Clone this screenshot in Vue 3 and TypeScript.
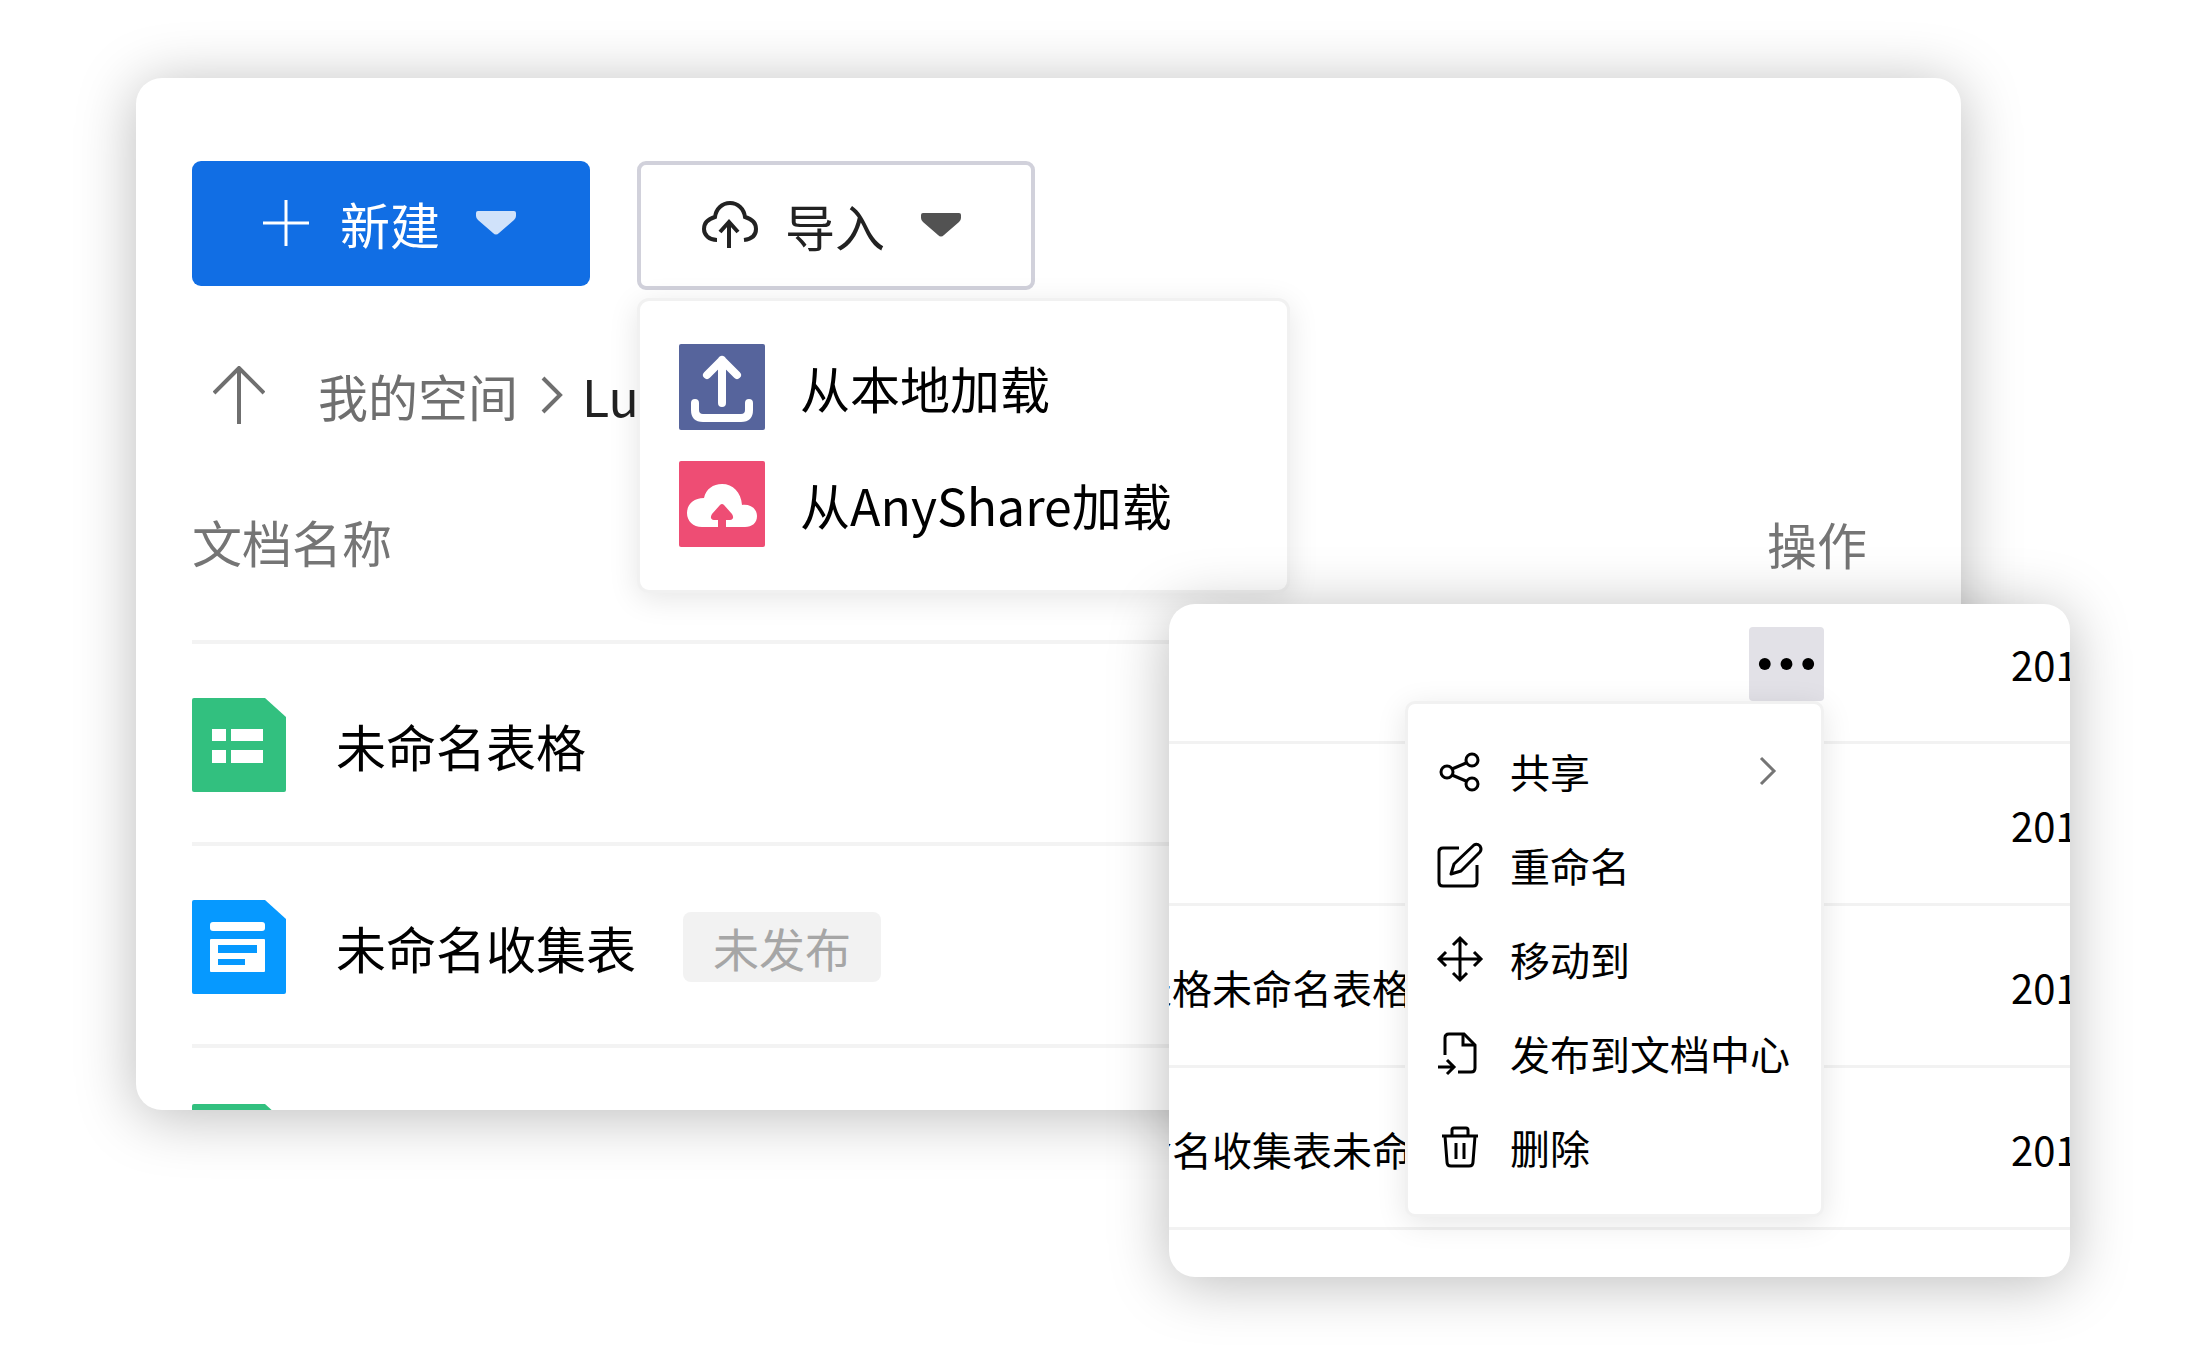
<script setup lang="ts">
interface DocRow {
  name: string
  kind: 'sheet' | 'form'
  badge?: string
}

interface FileRow {
  name: string
  date: string
  active?: boolean
}

type MenuIcon = 'share' | 'rename' | 'move' | 'publish' | 'delete'

const docs: DocRow[] = [
  { name: '未命名表格', kind: 'sheet' },
  { name: '未命名收集表', kind: 'form', badge: '未发布' },
]

const files: FileRow[] = [
  { name: '', date: '201', active: true },
  { name: '', date: '201' },
  { name: '表格未命名表格', date: '201' },
  { name: '命名收集表未命', date: '201' },
]

const menu: { label: string; icon: MenuIcon; submenu?: boolean }[] = [
  { label: '共享', icon: 'share', submenu: true },
  { label: '重命名', icon: 'rename' },
  { label: '移动到', icon: 'move' },
  { label: '发布到文档中心', icon: 'publish' },
  { label: '删除', icon: 'delete' },
]
</script>

<template>
  <main class="page">
    <section class="panel library">
      <div class="toolbar">
        <button type="button" class="btn btn-primary">
          <svg class="plus" viewBox="0 0 46 48" aria-hidden="true">
            <path d="M23 1v46M0 24h46" fill="none" stroke="currentColor" stroke-width="3" />
          </svg>
          <span>新建</span>
          <svg class="caret" viewBox="0 0 40 24" aria-hidden="true">
            <path d="M2 0h36q2 0 2 2v3q0 2-2 4L23 22q-3 3-6 0L2 9Q0 7 0 5V2q0-2 2-2z" fill="currentColor" />
          </svg>
        </button>
        <div class="import">
          <button type="button" class="btn btn-outline" aria-expanded="true">
            <svg class="cloud" viewBox="0 0 56 48" aria-hidden="true">
              <path d="M15 39C7 39 2 34 2 28c0-6 4-10 11-12C14 8 20 2 28 2s14 6 15 14c7 2 11 6 11 12 0 6-4 10-12 11M27 47V22M18 31l9-10 9 10" fill="none" stroke="currentColor" stroke-width="4" />
            </svg>
            <span>导入</span>
            <svg class="caret" viewBox="0 0 40 24" aria-hidden="true">
              <path d="M2 0h36q2 0 2 2v3q0 2-2 4L23 22q-3 3-6 0L2 9Q0 7 0 5V2q0-2 2-2z" fill="currentColor" />
            </svg>
          </button>
          <div class="dropdown">
            <button type="button" class="source">
              <svg class="source-icon" viewBox="0 0 86 86" aria-hidden="true">
                <rect width="86" height="86" rx="2" fill="#56649c" />
                <path d="M43 59V16M28 31l15-15 15 15M16 59v7q0 8 8 8h38q8 0 8-8v-7" fill="none" stroke="#fff" stroke-width="8" stroke-linecap="round" stroke-linejoin="round" />
              </svg>
              <span>从本地加载</span>
            </button>
            <button type="button" class="source">
              <svg class="source-icon" viewBox="0 0 86 86" aria-hidden="true">
                <rect width="86" height="86" rx="2" fill="#ee4d74" />
                <path d="M23 66C14 66 8 60 8 52c0-8 6-15 17-15C27 28 34 23 43 23c11 0 19 8 20 21 9-1 15 4 15 11s-5 11-12 11z" fill="#fff" />
                <path d="M39 67V59h-4q-5-1-2-6l8-9q2-2 4 0l8 9q3 5-2 6h-4v8z" fill="#ee4d74" />
              </svg>
              <span>从AnyShare加载</span>
            </button>
          </div>
        </div>
      </div>

      <nav class="crumbs">
        <button type="button" class="up" aria-label="返回上一级">
          <svg viewBox="0 0 52 58" aria-hidden="true">
            <path d="M26 58V2M1 27L26 2l25 25" fill="none" stroke="currentColor" stroke-width="4" />
          </svg>
        </button>
        <a href="#">我的空间</a>
        <svg class="crumb-sep" viewBox="0 0 22 38" aria-hidden="true">
          <path d="M2 2l17 17L2 36" fill="none" stroke="currentColor" stroke-width="4" />
        </svg>
        <span class="current">Lu</span>
      </nav>

      <table class="docs">
        <thead>
          <tr>
            <th>文档名称</th>
            <th class="actions">操作</th>
          </tr>
        </thead>
        <tbody>
          <tr v-for="doc in docs" :key="doc.name">
            <td colspan="2">
              <div class="doc">
                <svg class="doc-icon" viewBox="0 0 94 94" aria-hidden="true">
                  <template v-if="doc.kind === 'sheet'">
                    <path d="M2 0h71l21 19v73q0 2-2 2H2q-2 0-2-2V2q0-2 2-2z" fill="#32c07f" />
                    <path d="M20 31h14v12H20zM39 31h32v12H39zM20 52h14v13H20zM39 52h32v13H39z" fill="#fff" />
                  </template>
                  <template v-else>
                    <path d="M2 0h71l21 19v73q0 2-2 2H2q-2 0-2-2V2q0-2 2-2z" fill="#0699ff" />
                    <rect x="18" y="22" width="55" height="9" rx="3" fill="#fff" />
                    <rect x="18" y="39" width="55" height="33" rx="1" fill="#fff" />
                    <path d="M26 45h39v8H26zM26 59h27v6H26z" fill="#0699ff" />
                  </template>
                </svg>
                <a href="#" class="doc-name">{{ doc.name }}</a>
                <span v-if="doc.badge" class="badge">{{ doc.badge }}</span>
              </div>
            </td>
          </tr>
        </tbody>
      </table>
      <div class="peek">
        <svg class="doc-icon" viewBox="0 0 94 94" aria-hidden="true">
          <path d="M2 0h71l21 19v73q0 2-2 2H2q-2 0-2-2V2q0-2 2-2z" fill="#32c07f" />
        </svg>
      </div>
    </section>

    <section class="panel files">
      <div class="clip">
        <table class="file-table">
          <tbody>
            <tr v-for="(file, i) in files" :key="i">
              <td class="file-name">{{ file.name }}</td>
              <td class="file-more">
                <button v-if="file.active" type="button" class="more" aria-label="更多">
                  <svg viewBox="0 0 76 74" aria-hidden="true">
                    <circle cx="16" cy="37" r="6" />
                    <circle cx="38" cy="37" r="6" />
                    <circle cx="60" cy="37" r="6" />
                  </svg>
                </button>
              </td>
              <td class="file-date">{{ file.date }}</td>
            </tr>
          </tbody>
        </table>
      </div>

      <div class="menu">
        <button v-for="item in menu" :key="item.icon" type="button" class="menu-item">
          <svg class="menu-icon" viewBox="0 0 48 48" fill="none" stroke="currentColor" stroke-width="3" aria-hidden="true">
            <template v-if="item.icon === 'share'">
              <circle cx="11" cy="25" r="6" />
              <circle cx="36" cy="13" r="6" />
              <circle cx="36" cy="37" r="6" />
              <path d="M16 22l14-6M16 28l14 6" />
            </template>
            <template v-else-if="item.icon === 'rename'">
              <path d="M23 7H7q-4 0-4 4v30q0 4 4 4h30q4 0 4-4V24" />
              <path d="M15 33l3-10L38 4q3-2 6 1 2 3 0 6L25 30z" stroke-linejoin="round" />
            </template>
            <template v-else-if="item.icon === 'move'">
              <path d="M24 3v42M3 24h42M17 10l7-7 7 7M17 38l7 7 7-7M10 17l-7 7 7 7M38 17l7 7-7 7" />
            </template>
            <template v-else-if="item.icon === 'publish'">
              <path d="M9 26V9q0-4 4-4h15l11 11v23q0 4-4 4H22" />
              <path d="M27 5v11h12M2 38h15M11 31l7 7-7 7" />
            </template>
            <template v-else>
              <path d="M6 13h36M16 13V7q0-2 2-2h12q2 0 2 2v6M9 13l2 26q0 4 4 4h18q4 0 4-4l2-26M20 20v16M28 20v16" />
            </template>
          </svg>
          <span class="menu-label">{{ item.label }}</span>
          <svg v-if="item.submenu" class="submenu" viewBox="0 0 18 30" aria-hidden="true">
            <path d="M2 2l13 13L2 28" fill="none" stroke="currentColor" stroke-width="3" />
          </svg>
        </button>
      </div>
    </section>
  </main>
</template>

<style>
body {
  margin: 0;
  background: #fff;
}
</style>

<style scoped>
.page {
  position: relative;
  box-sizing: border-box;
  min-height: 100vh;
  padding: 78px 238px 0 136px;
  overflow: hidden;
  font-family: "Noto Sans CJK SC", "Noto Sans", sans-serif;
  font-size: 50px;
  line-height: 50px;
  color: #000;
}

button {
  font: inherit;
  color: inherit;
  margin: 0;
  padding: 0;
  border: 0;
  background: none;
  cursor: pointer;
}

a {
  color: inherit;
  text-decoration: none;
}

svg {
  display: block;
  flex: none;
}

.panel {
  isolation: isolate;
  border-radius: 26px;
  background: #fff;
  box-shadow: 0 6px 60px rgba(0, 0, 0, 0.27);
}

.library {
  padding: 83px 56px 0;
}

.toolbar {
  display: flex;
  align-items: flex-start;
  gap: 47px;
}

.btn {
  display: flex;
  align-items: center;
  box-sizing: border-box;
  width: 398px;
  border-radius: 9px;
}

.btn-primary {
  height: 125px;
  padding: 0 0 2px 71px;
  background: #116ee4;
  color: #fff;
}

.plus {
  width: 46px;
  height: 48px;
  margin-right: 31px;
}

.caret {
  width: 40px;
  height: 24px;
  margin-left: 36px;
}

.btn-primary .caret {
  color: #d0e2fa;
}

.btn-outline {
  height: 129px;
  padding: 0 0 2px 61px;
  border: 4px solid #d1d1db;
  background: #fff;
  color: #222;
}

.btn-outline .caret {
  color: #525252;
}

.cloud {
  width: 56px;
  height: 48px;
  margin-right: 27px;
}

.import {
  position: relative;
}

.dropdown {
  position: absolute;
  z-index: 2;
  top: 137px;
  left: 0;
  display: flex;
  flex-direction: column;
  gap: 31px;
  box-sizing: border-box;
  width: 653px;
  padding: 43px 39px;
  border: 3px solid #f1f1f1;
  border-radius: 12px;
  background: #fff;
  background-clip: padding-box;
  box-shadow: 0 6px 30px rgba(0, 0, 0, 0.1);
}

.source {
  display: flex;
  align-items: center;
  gap: 35px;
  white-space: nowrap;
}

.source-icon {
  width: 86px;
  height: 86px;
}

.crumbs {
  display: flex;
  align-items: center;
  height: 50px;
  margin-top: 80px;
  padding-left: 21px;
  color: #6f6f6f;
}

.up {
  margin-right: 53px;
}

.up svg {
  width: 52px;
  height: 58px;
}

.crumb-sep {
  width: 22px;
  height: 38px;
  margin: 0 19px 0 23px;
}

.current {
  color: #222;
}

.docs {
  width: 100%;
  margin-top: 22px;
  border-collapse: separate;
  border-spacing: 0;
}

.docs th {
  box-sizing: border-box;
  height: 202px;
  padding: 0;
  border-bottom: 4px solid #f3f3f3;
  font-weight: 400;
  text-align: left;
  color: #757575;
}

.docs .actions {
  padding: 4px 38px 0 0;
  text-align: right;
}

.docs td {
  box-sizing: border-box;
  height: 202px;
  padding: 4px 0 0;
  border-bottom: 4px solid #f3f3f3;
}

.doc {
  display: flex;
  align-items: center;
}

.doc-icon {
  width: 94px;
  height: 94px;
}

.doc-name {
  margin-left: 50px;
}

.badge {
  margin-left: 47px;
  padding: 0 30px;
  border-radius: 8px;
  background: #f2f2f2;
  font-size: 46px;
  line-height: 70px;
  color: #a6a6a6;
}

.peek {
  height: 6px;
  padding-top: 56px;
  overflow: clip;
}

.files {
  position: absolute;
  z-index: 3;
  top: 604px;
  right: 129px;
  left: 1169px;
  font-size: 40px;
  line-height: 40px;
}

.clip {
  padding-bottom: 47px;
  overflow: hidden;
  border-radius: 26px;
}

.file-table {
  width: calc(100% + 74px);
  margin-left: -37px;
  table-layout: fixed;
  border-collapse: separate;
  border-spacing: 0;
  white-space: nowrap;
}

.file-table td {
  box-sizing: border-box;
  height: 162px;
  padding: 3px 0 0;
  border-bottom: 3px solid #f2f2f2;
}

.file-table tr:first-child td {
  height: 140px;
  padding-top: 0;
  vertical-align: top;
}

.file-more {
  width: 262px;
}

.file-date {
  width: 96px;
}

.file-table tr:first-child .file-date {
  padding-top: 40px;
}

.more {
  display: block;
  margin-top: 23px;
  border-radius: 4px;
  background: #e2e1e7;
}

.more svg {
  width: 75px;
  height: 74px;
}

.menu {
  position: absolute;
  z-index: 1;
  top: 97px;
  right: 246px;
  box-sizing: border-box;
  width: 419px;
  padding: 20px 24px 20px 28px;
  border: 3px solid #f1f1f1;
  border-radius: 10px;
  background: #fff;
  background-clip: padding-box;
  box-shadow: 0 6px 30px rgba(0, 0, 0, 0.1);
}

.menu-item {
  display: flex;
  align-items: center;
  width: 100%;
  height: 94px;
  white-space: nowrap;
}

.menu-icon {
  width: 48px;
  height: 48px;
  margin-right: 26px;
}

.submenu {
  width: 18px;
  height: 30px;
  margin-right: 20px;
  margin-left: auto;
  color: #757575;
}
</style>
